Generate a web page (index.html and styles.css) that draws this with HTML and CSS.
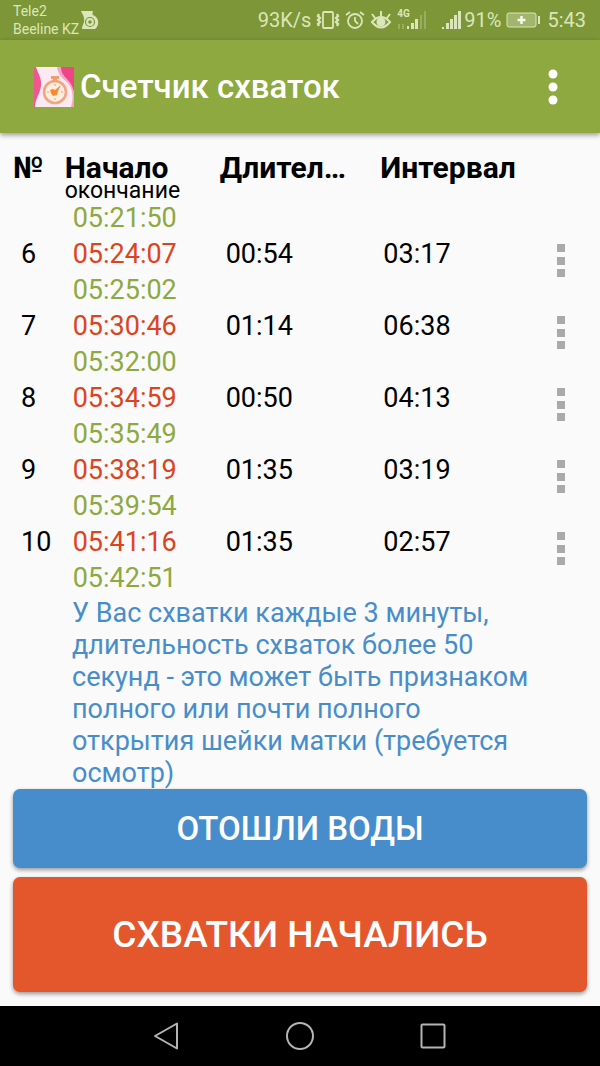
FILE: index.html
```html
<!DOCTYPE html>
<html lang="ru">
<head>
  <meta charset="UTF-8">
  <meta name="viewport" content="width=device-width, initial-scale=1.0">
  <title>Счетчик схваток</title>
  <link rel="stylesheet" href="styles.css">
</head>
<body>
  <div class="status-bar">
    <div class="carrier">
      <div>Tele2</div>
      <div>Beeline KZ</div>
    </div>
    <svg class="app-note" width="18" height="20" viewBox="0 0 18 20">
      <path d="M0 1h12q-1 3 0 4c6 2 7 10 2 14H1c0-4 3-6 2-10C3 5 1 4 0 1z" fill="#dbe6ba"/>
      <circle cx="9" cy="12" r="4.5" fill="none" stroke="#7d9637" stroke-width="1.2"/>
      <circle cx="9" cy="12" r="1.8" fill="#7d9637"/>
    </svg>
    <div class="status-icons">
      <span class="speed">93K/s</span>
      <svg width="24" height="20" viewBox="0 0 24 20" fill="none" stroke="#dbe6ba" stroke-width="1.8">
        <rect x="7" y="2" width="10" height="16" rx="1"/>
        <path d="M3 4l-1 2 2 2-2 2 2 2-2 2 1 2M21 4l1 2-2 2 2 2-2 2 2 2-1 2" stroke-width="2.4"/>
      </svg>
      <svg width="20" height="20" viewBox="0 0 20 20" fill="none" stroke="#dbe6ba" stroke-width="1.8">
        <circle cx="10" cy="11" r="7"/>
        <path d="M10 7v4l3 3M1 5l4-3M19 5l-4-3"/>
      </svg>
      <svg width="22" height="20" viewBox="0 0 22 20" fill="none" stroke="#dbe6ba" stroke-width="2">
        <path d="M2 12q9-10 18 0q-9 11-18 0zM11 6V1M5 8L2 4M17 8l3-4"/>
        <circle cx="11" cy="12" r="3.5" fill="#dbe6ba"/>
      </svg>
      <span class="network">
        <span class="network-type">4G</span>
        <svg width="30" height="20" viewBox="0 0 30 20" fill="#dbe6ba">
          <path d="M10 16h2v3h-2zM14 13h3v6h-3zM18 9h3v10h-3z"/>
          <path d="M1 14h2v5H1zM5 14h2v5H5zM23 5h2v14h-2zM27 1h2v18h-2z" opacity=".3"/>
        </svg>
      </span>
      <svg class="signal" width="20" height="20" viewBox="0 0 20 20" fill="#dbe6ba">
        <path d="M0 17h2v2H0zM4 13h3v6H4zM8 9h3v10H8zM12 5h3v14h-3zM16 1h3v18h-3z"/>
      </svg>
      <span class="percent">91%</span>
      <svg width="36" height="18" viewBox="0 0 36 18">
        <rect x="1" y="2" width="29" height="14" rx="2" fill="#a2b56c" stroke="#dbe6ba"/>
        <path d="M15.5 5v8M11.5 9h8" stroke="#f4f8e4" stroke-width="2.5"/>
        <path d="M33 5v8" stroke="#dbe6ba" stroke-width="2"/>
      </svg>
      <span class="clock">5:43</span>
    </div>
  </div>

  <header class="app-bar">
    <svg width="40" height="40" viewBox="0 0 40 40">
      <rect width="40" height="40" fill="#fbeaf1"/>
      <path d="M0 0h2c2 7 6 11 5 19-1 8-6 13-6 21H0z" fill="#f0568f"/>
      <path d="M23 0h17v40h-3c3-10 2-19-4-25-5-4-9-8-10-15z" fill="#f7a3c3"/>
      <path d="M27 0h13v24c-2-6-4-9-7-12-4-4-6-7-6-12z" fill="#ee4585"/>
      <circle cx="21" cy="25" r="11" fill="#fdeee2" stroke="#f2a582" stroke-width="2.6"/>
      <path d="M17 9h8v3h-8zM19 11h4v4h-4z" fill="#f0a06a"/>
      <path d="M21 17v2M21 31v2M13 25h2M27 25h2" stroke="#f5b98a" stroke-width="1.5"/>
      <path d="M16 23l3-1 2 1 6-5-3 6-1 4-4 1-2-3z" fill="#f58b2e"/>
    </svg>
    <h1>Счетчик схваток</h1>
    <button class="menu-button" type="button" aria-label="Меню">
      <svg width="10" height="38" viewBox="0 0 10 38" fill="#fff">
        <circle cx="5" cy="6" r="4.5"/>
        <circle cx="5" cy="19" r="4.5"/>
        <circle cx="5" cy="32" r="4.5"/>
      </svg>
    </button>
  </header>

  <main>
    <table>
      <thead>
        <tr>
          <th class="col-number">№</th>
          <th class="col-start">Начало<div class="sub">окончание</div></th>
          <th class="col-length">Длител…</th>
          <th class="col-interval">Интервал</th>
          <td class="col-more"></td>
        </tr>
      </thead>
      <tbody>
        <tr>
          <td></td>
          <td class="times"><div class="end">05:21:50</div></td>
          <td></td>
          <td></td>
          <td></td>
        </tr>
        <tr>
          <td class="number">6</td>
          <td class="times"><div class="start">05:24:07</div><div class="end">05:25:02</div></td>
          <td class="length">00:54</td>
          <td class="interval">03:17</td>
          <td><button class="more" type="button" aria-label="Действия, 6"><svg width="8" height="34" viewBox="0 0 8 34"><path d="M0 0h8v8H0zM0 13h8v8H0zM0 25h8v8H0z"/></svg></button></td>
        </tr>
        <tr>
          <td class="number">7</td>
          <td class="times"><div class="start">05:30:46</div><div class="end">05:32:00</div></td>
          <td class="length">01:14</td>
          <td class="interval">06:38</td>
          <td><button class="more" type="button" aria-label="Действия, 7"><svg width="8" height="34" viewBox="0 0 8 34"><path d="M0 0h8v8H0zM0 13h8v8H0zM0 25h8v8H0z"/></svg></button></td>
        </tr>
        <tr>
          <td class="number">8</td>
          <td class="times"><div class="start">05:34:59</div><div class="end">05:35:49</div></td>
          <td class="length">00:50</td>
          <td class="interval">04:13</td>
          <td><button class="more" type="button" aria-label="Действия, 8"><svg width="8" height="34" viewBox="0 0 8 34"><path d="M0 0h8v8H0zM0 13h8v8H0zM0 25h8v8H0z"/></svg></button></td>
        </tr>
        <tr>
          <td class="number">9</td>
          <td class="times"><div class="start">05:38:19</div><div class="end">05:39:54</div></td>
          <td class="length">01:35</td>
          <td class="interval">03:19</td>
          <td><button class="more" type="button" aria-label="Действия, 9"><svg width="8" height="34" viewBox="0 0 8 34"><path d="M0 0h8v8H0zM0 13h8v8H0zM0 25h8v8H0z"/></svg></button></td>
        </tr>
        <tr>
          <td class="number">10</td>
          <td class="times"><div class="start">05:41:16</div><div class="end">05:42:51</div></td>
          <td class="length">01:35</td>
          <td class="interval">02:57</td>
          <td><button class="more" type="button" aria-label="Действия, 10"><svg width="8" height="34" viewBox="0 0 8 34"><path d="M0 0h8v8H0zM0 13h8v8H0zM0 25h8v8H0z"/></svg></button></td>
        </tr>
      </tbody>
    </table>

    <p class="message">У Вас схватки каждые 3 минуты, длительность схваток более 50 секунд - это может быть признаком полного или почти полного открытия шейки матки (требуется осмотр)</p>

    <div class="actions">
      <button class="waters" type="button">ОТОШЛИ ВОДЫ</button>
      <button class="begin" type="button">СХВАТКИ НАЧАЛИСЬ</button>
    </div>
  </main>

  <nav class="nav-bar">
    <button type="button" aria-label="Назад">
      <svg width="28" height="30" viewBox="0 0 28 30"><path d="M24 2.5v25L2 15z"/></svg>
    </button>
    <button type="button" aria-label="Домой">
      <svg width="28" height="30" viewBox="0 0 28 30"><circle cx="14" cy="15" r="13"/></svg>
    </button>
    <button type="button" aria-label="Недавние">
      <svg width="28" height="30" viewBox="0 0 28 30"><rect x="2.5" y="3.5" width="23" height="23" rx="1"/></svg>
    </button>
  </nav>
</body>
</html>
```
FILE: styles.css
```css
* {
  box-sizing: border-box;
}
body {
  display: flex;
  flex-direction: column;
  min-height: 100vh;
  margin: 0;
  background: #fafafa;
  color: #000;
  font-family: Roboto, sans-serif;
}
button {
  padding: 0;
  border: none;
  background: none;
  font-family: inherit;
  cursor: pointer;
}
svg {
  display: block;
  flex: none;
}

/* status bar */
.status-bar {
  display: flex;
  align-items: center;
  height: 40px;
  padding: 0 14px 0 13px;
  background: #7d9637;
  color: #dbe6ba;
}
.carrier {
  font-size: 14px;
  line-height: 18px;
}
.app-note {
  margin-left: 2px;
}
.status-icons {
  display: flex;
  align-items: center;
  gap: 5px;
  margin-left: auto;
  font-size: 20px;
}
.network {
  position: relative;
}
.network-type {
  position: absolute;
  top: -1px;
  left: 0;
  font-size: 10px;
  font-weight: bold;
  line-height: 10px;
}
.signal {
  margin-left: 10px;
}
.percent {
  margin-left: -3px;
}

/* title */
.app-bar {
  display: flex;
  align-items: center;
  height: 93px;
  padding: 0 32px 0 34px;
  background: #8ea93f;
  box-shadow: 0 2px 5px rgba(0, 0, 0, 0.4);
  color: #fff;
}
h1 {
  flex: 1;
  margin: 0 0 0 6px;
  font-size: 33px;
  font-weight: 500;
}
.menu-button {
  padding: 4px 10px;
}

/* contractions list */
main {
  flex: 1;
  padding: 21px 13px 0;
}
table {
  width: 100%;
  border-collapse: collapse;
  table-layout: fixed;
  font-size: 27px;
  line-height: 36px;
}
th, td {
  padding: 0;
  text-align: left;
  vertical-align: top;
}
th {
  font-size: 30px;
  line-height: 28px;
}
.sub {
  font-size: 23px;
  font-weight: normal;
  line-height: 18px;
}
.col-number {
  width: 9%;
}
.col-start {
  width: 27%;
}
.col-length {
  width: 28%;
}
.col-more {
  width: 9%;
}
.number, .times {
  padding-left: 8px;
}
.length {
  padding-left: 6px;
}
.interval {
  padding-left: 3px;
}
.start {
  color: #de4320;
}
.end {
  color: #8ea93f;
}
.more {
  display: block;
  margin: 0 auto;
  padding: 8px;
  fill: #aaa;
}
.message {
  margin: 1px 48px 0 59px;
  color: #488dcb;
  font-size: 27px;
  line-height: 32px;
}

/* bottom buttons */
.actions {
  display: flex;
  flex-direction: column;
  gap: 9px;
  padding-bottom: 14px;
}
.waters, .begin {
  border-radius: 7px;
  box-shadow: 0 2px 4px rgba(0, 0, 0, 0.4);
  color: #fff;
  font-weight: 500;
}
.waters {
  height: 79px;
  background: #488dcb;
  font-size: 33px;
}
.begin {
  height: 115px;
  background: #e4572d;
  font-size: 37px;
}

.nav-bar {
  display: flex;
  justify-content: center;
  align-items: center;
  gap: 105px;
  height: 60px;
  background: #000;
}
.nav-bar svg {
  fill: none;
  stroke: #b4b4b4;
  stroke-width: 2;
  stroke-linejoin: round;
}
```
